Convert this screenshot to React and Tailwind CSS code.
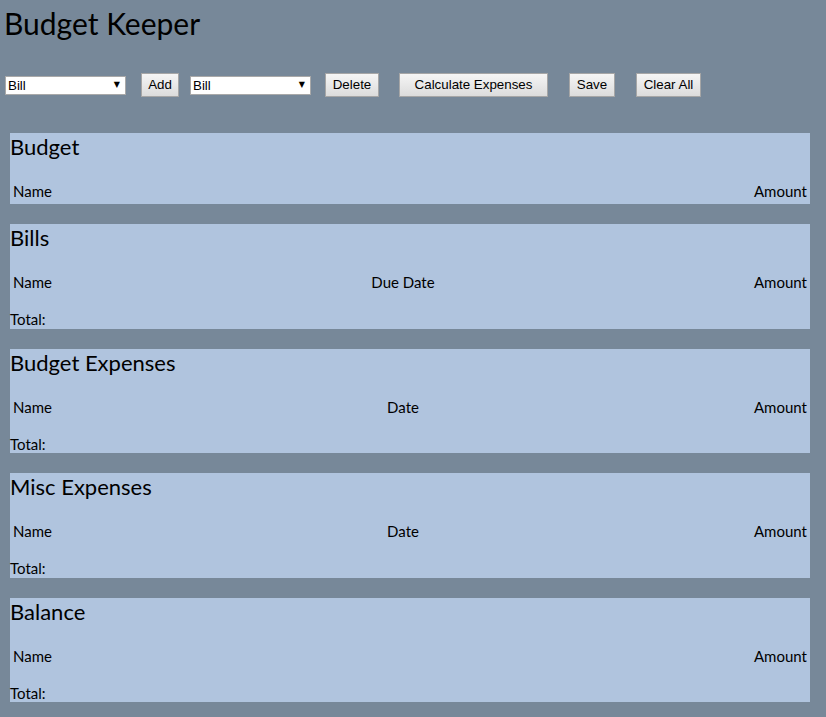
import React from 'react';

// Sections of the budget page: title, extra middle column, and whether a total line shows
const sections = [
    { title: 'Budget', middle: null, total: false },
    { title: 'Bills', middle: 'Due Date', total: true },
    { title: 'Budget Expenses', middle: 'Date', total: true },
    { title: 'Misc Expenses', middle: 'Date', total: true },
    { title: 'Balance', middle: null, total: true },
];

const btn = 'h-[24px] border border-[#a6a6a6] bg-linear-to-b from-[#f5f5f5] to-[#dcdcdc] text-[13.33px] text-black font-["Liberation_Sans",Arial,sans-serif] leading-none';

const Picker = ({ className }) => (
    <div className={`relative h-[19px] w-[121px] ${className}`}>
        <select className='block h-[19px] w-full appearance-none border border-[#a9a9a9] bg-white py-0 pl-[2px] text-[13.33px] leading-[17px] text-black font-["Liberation_Sans",Arial,sans-serif] outline-none'>
            <option>Bill</option>
            <option>Budget Expense</option>
            <option>Misc Expense</option>
        </select>
        <span className='pointer-events-none absolute right-[6px] top-[5px] text-[8px] leading-none text-black font-["DejaVu_Sans",sans-serif]'>▼</span>
    </div>
);

const Section = ({ title, middle, total }) => (
    <div className={`ml-[10px] w-[800px] bg-[#b0c4de] ${total ? 'h-[104.5px]' : 'h-[71px]'}`}>
        <h2 className="text-[22px] leading-[28px] text-black">{title}</h2>
        <div className="mt-[20px] grid h-[20px] grid-cols-3 items-center pl-[3px] pr-[3px] text-[15px] leading-[20px]">
            <span>Name</span>
            <span className="pr-[14px] text-center">{middle}</span>
            <span className="text-right">Amount</span>
        </div>
        {total && <p className="mt-[18px] text-[15px] leading-[18px]">Total:</p>}
    </div>
);

export default function App() {
    return (
        <div className='min-h-[717px] bg-[#778899] text-black font-["Lato","Open_Sans",sans-serif]'>
            <h1 className="pl-[4px] pt-[5px] text-[30px] leading-[36px] font-normal">Budget Keeper</h1>

            {/* Controls row */}
            <div className="mt-[32px] flex h-[24px] items-center">
                <Picker className="ml-[5px]" />
                <button className={`${btn} ml-[15px] w-[38px]`}>Add</button>
                <Picker className="ml-[11px]" />
                <button className={`${btn} ml-[14px] w-[54px]`}>Delete</button>
                <button className={`${btn} ml-[20px] w-[149px]`}>Calculate Expenses</button>
                <button className={`${btn} ml-[21px] w-[46px]`}>Save</button>
                <button className={`${btn} ml-[21px] w-[65px]`}>Clear All</button>
            </div>

            <div className="mt-[36px] flex flex-col gap-[20px] pb-[15px]">
                {sections.map(s => (
                    <Section key={s.title} {...s} />
                ))}
            </div>
        </div>
    );
}
